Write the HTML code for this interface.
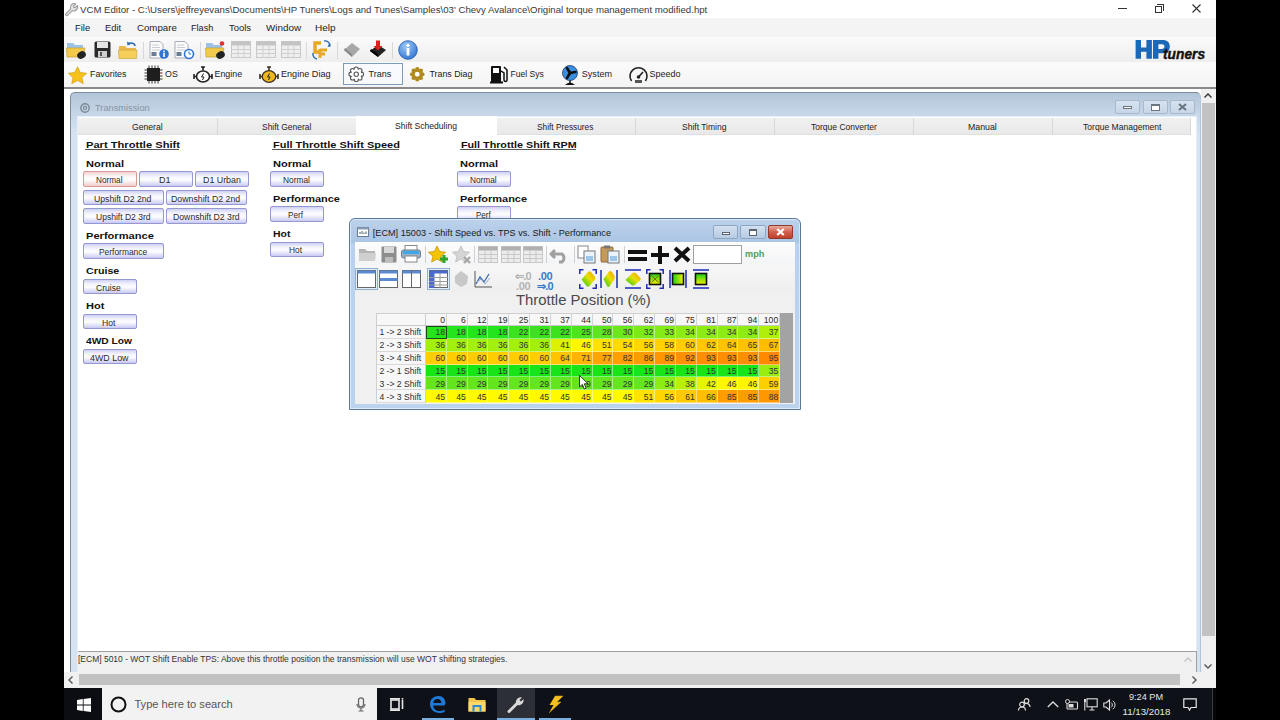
<!DOCTYPE html>
<html><head><meta charset="utf-8">
<style>
*{margin:0;padding:0;box-sizing:border-box}
html,body{width:1280px;height:720px;overflow:hidden;background:#000;font-family:"Liberation Sans",sans-serif;color:#1e1e1e;position:relative}
.a{position:absolute}
.t{position:absolute;white-space:nowrap;line-height:1}
svg{overflow:visible}
</style></head><body>
<div class="a" style="left:64px;top:0px;width:1152px;height:688px;background:#fff"></div>
<div class="a" style="left:64px;top:0px;width:1152px;height:18px;background:#fff"></div>
<svg class="a" style="left:65px;top:3px" width="13" height="13" viewBox="0 0 13 13"><path d="M0.9 10.6 L5.6 5.9 A4 4 0 0 1 10.8 0.8 L8.6 3 L8.9 4.4 L10.2 4.7 L12.4 2.5 A4 4 0 0 1 7.3 7.7 L2.6 12.3 A1.2 1.2 0 0 1 0.9 10.6Z" fill="#e4e4e4" stroke="#9a9a9a" stroke-width="1.1" stroke-linejoin="round"/></svg>
<div class="t" style="left:80.00px;top:5px;font-size:9.64px;color:#383838;transform:scaleX(1.0009);transform-origin:0 0;">VCM Editor - C:\Users\jeffreyevans\Documents\HP Tuners\Logs and Tunes\Samples\03' Chevy Avalance\Original torque management modified.hpt</div>
<div class="a" style="left:1118px;top:8px;width:9px;height:1px;background:#333"></div>
<div class="a" style="left:1155px;top:6px;width:7px;height:7px;border:1px solid #333;background:#fff"></div>
<div class="a" style="left:1157px;top:4px;width:7px;height:7px;border-top:1px solid #333;border-right:1px solid #333"></div>
<svg class="a" style="left:1192px;top:4px" width="9" height="9" viewBox="0 0 9 9"><path d="M0.5 0.5 L8.5 8.5 M8.5 0.5 L0.5 8.5" stroke="#333" stroke-width="1.1"/></svg>
<div class="a" style="left:64px;top:18px;width:1152px;height:19px;background:#f4f4f4"></div>
<div class="t" style="left:75.35px;top:23px;font-size:9.50px;color:#222;transform:scaleX(0.9893);transform-origin:0 0;">File</div>
<div class="t" style="left:105.05px;top:23px;font-size:9.50px;color:#222;transform:scaleX(0.9823);transform-origin:0 0;">Edit</div>
<div class="t" style="left:136.52px;top:23px;font-size:9.50px;color:#222;transform:scaleX(1.0189);transform-origin:0 0;">Compare</div>
<div class="t" style="left:190.77px;top:23px;font-size:9.50px;color:#222;transform:scaleX(0.9593);transform-origin:0 0;">Flash</div>
<div class="t" style="left:228.56px;top:23px;font-size:9.50px;color:#222;transform:scaleX(0.9929);transform-origin:0 0;">Tools</div>
<div class="t" style="left:265.60px;top:23px;font-size:9.50px;color:#222;transform:scaleX(1.0352);transform-origin:0 0;">Window</div>
<div class="t" style="left:315.45px;top:23px;font-size:9.50px;color:#222;transform:scaleX(1.0557);transform-origin:0 0;">Help</div>
<div class="a" style="left:64px;top:37px;width:1152px;height:25px;background:linear-gradient(#fafafa,#eeeeee)"></div>
<div class="a" style="left:64px;top:62px;width:1152px;height:25px;background:linear-gradient(#fbfbfb,#f4f4f4)"></div>
<div class="a" style="left:64px;top:87px;width:1152px;height:2px;background:#8a8a8a"></div>
<div class="a" style="left:64px;top:89px;width:1152px;height:599px;background:#fff"></div>
<svg class="a" style="left:66px;top:41px" width="21" height="18" viewBox="0 0 21 18"><path d="M1 2 L7 2 L9 4 L17 4 L17 15 L1 15Z" fill="#9cc2e6"/><path d="M0.5 7 L19 7 L17 16 L1 16Z" fill="#f2c94c" stroke="#c9a030" stroke-width="0.7"/><ellipse cx="15.5" cy="14" rx="4.5" ry="3.6" fill="#222" transform="rotate(-30 15.5 14)"/></svg>
<svg class="a" style="left:94px;top:41px" width="17" height="17" viewBox="0 0 17 17"><rect x="0.5" y="0.5" width="16" height="16" rx="1.5" fill="#2b2b2b"/><rect x="3" y="1" width="11" height="6" fill="#e6e6e6"/><rect x="4" y="10" width="9" height="6" fill="#cfcfcf"/><rect x="6" y="11" width="2" height="4" fill="#555"/></svg>
<svg class="a" style="left:118px;top:40px" width="20" height="19" viewBox="0 0 20 19"><path d="M1 6 L7 6 L9 8 L18 8 L18 18 L1 18Z" fill="#e8b84a"/><path d="M0.5 10 L19 10 L18.5 18.5 L1 18.5Z" fill="#f5cf5a" stroke="#d0a838" stroke-width="0.7"/><path d="M10 4 A4 3 0 0 1 17 6" fill="none" stroke="#2a6ab0" stroke-width="1.5"/><path d="M9 1.5 L9.5 5.5 L13 4Z" fill="#2a6ab0"/></svg>
<div class="a" style="left:143px;top:42px;width:1px;height:17px;background:#d8d8d8"></div>
<svg class="a" style="left:149px;top:41px" width="20" height="18" viewBox="0 0 20 18"><path d="M1 0.5 L11 0.5 L14 3.5 L14 17 L1 17Z" fill="#fbfbfb" stroke="#aab"/><path d="M3 4 H10 M3 6.5 H11 M3 9 H11" stroke="#c8ccd4"/><rect x="2.5" y="11" width="5" height="4" fill="#6a7d92"/><circle cx="15" cy="13" r="4.8" fill="#2f74d0"/><rect x="14.2" y="12" width="1.6" height="4" fill="#fff"/><circle cx="15" cy="10.5" r="0.9" fill="#fff"/></svg>
<svg class="a" style="left:174px;top:41px" width="20" height="18" viewBox="0 0 20 18"><path d="M1 0.5 L11 0.5 L14 3.5 L14 17 L1 17Z" fill="#fbfbfb" stroke="#aab"/><path d="M3 4 H10 M3 6.5 H11 M3 9 H11" stroke="#c8ccd4"/><rect x="2.5" y="11" width="5" height="4" fill="#6a7d92"/><circle cx="15" cy="13" r="4.5" fill="#fff" stroke="#2f74d0" stroke-width="1.6"/><path d="M15 10.5 V13 H17" fill="none" stroke="#2f74d0" stroke-width="1"/></svg>
<div class="a" style="left:199.5px;top:42px;width:1px;height:17px;background:#d8d8d8"></div>
<svg class="a" style="left:205px;top:41px" width="21" height="18" viewBox="0 0 21 18"><path d="M1 2 L7 2 L9 4 L17 4 L17 15 L1 15Z" fill="#9cc2e6"/><path d="M0.5 7 L19 7 L17 16 L1 16Z" fill="#f2c94c" stroke="#c9a030" stroke-width="0.7"/><ellipse cx="15.5" cy="14" rx="4.5" ry="3.6" fill="#222" transform="rotate(-30 15.5 14)"/><circle cx="17" cy="2.5" r="2.3" fill="#e03030"/></svg>
<svg class="a" style="left:230.6px;top:41px" width="20" height="17" viewBox="0 0 20 17"><rect x="0.5" y="0.5" width="19" height="16" fill="#efefef" stroke="#c8c8c8"/><rect x="0.5" y="0.5" width="19" height="4" fill="#c4c4c4"/><path d="M0.5 8.5 H19.5 M0.5 12.5 H19.5 M7 4 V17 M13 4 V17" stroke="#cfcfcf"/></svg>
<svg class="a" style="left:256px;top:41px" width="20" height="17" viewBox="0 0 20 17"><rect x="0.5" y="0.5" width="19" height="16" fill="#efefef" stroke="#c8c8c8"/><rect x="0.5" y="0.5" width="19" height="4" fill="#c4c4c4"/><path d="M0.5 8.5 H19.5 M0.5 12.5 H19.5 M7 4 V17 M13 4 V17" stroke="#cfcfcf"/></svg>
<svg class="a" style="left:281px;top:41px" width="20" height="17" viewBox="0 0 20 17"><rect x="0.5" y="0.5" width="19" height="16" fill="#efefef" stroke="#c8c8c8"/><rect x="0.5" y="0.5" width="19" height="4" fill="#c4c4c4"/><path d="M0.5 8.5 H19.5 M0.5 12.5 H19.5 M7 4 V17 M13 4 V17" stroke="#cfcfcf"/></svg>
<div class="a" style="left:306px;top:42px;width:1px;height:17px;background:#d8d8d8"></div>
<svg class="a" style="left:311.6px;top:40px" width="19" height="20" viewBox="0 0 19 20"><path d="M9 3 H3 V12 H9" fill="none" stroke="#e8a820" stroke-width="3.5"/><path d="M8 9 V18 M8 10 H15 M8 14 H13" fill="none" stroke="#e8a820" stroke-width="3"/><path d="M12 1 A5 5 0 0 1 18 6" fill="none" stroke="#2a6ab0" stroke-width="1.4"/><path d="M17 4 L18.5 7 L15.5 6.5Z" fill="#2a6ab0"/><path d="M1 13 A5 5 0 0 0 5 19" fill="none" stroke="#2a6ab0" stroke-width="1.4"/></svg>
<div class="a" style="left:337.4px;top:42px;width:1px;height:17px;background:#d8d8d8"></div>
<svg class="a" style="left:343.4px;top:41px" width="18" height="17" viewBox="0 0 18 17"><path d="M1 9 L9 2 L17 8 L9 16Z" fill="#a8a8a8"/><path d="M1 9 L9 16 L9 13 L2 7Z" fill="#8a8a8a"/></svg>
<svg class="a" style="left:368.6px;top:40px" width="18" height="19" viewBox="0 0 18 19"><path d="M1 11 L9 5 L17 10 L9 17Z" fill="#222"/><path d="M1 11 L9 17 L9 14 L2 9Z" fill="#000"/><path d="M7 0.5 H11 V6 H13.5 L9 10.5 L4.5 6 H7Z" fill="#e02020"/></svg>
<div class="a" style="left:392.3px;top:42px;width:1px;height:17px;background:#d8d8d8"></div>
<svg class="a" style="left:398.3px;top:40px" width="20" height="20" viewBox="0 0 20 20"><defs><radialGradient id="ib" cx="0.4" cy="0.3" r="0.8"><stop offset="0" stop-color="#9cc8f4"/><stop offset="1" stop-color="#2a6ed0"/></radialGradient></defs><circle cx="10" cy="10" r="9.3" fill="url(#ib)" stroke="#1a58b0" stroke-width="0.8"/><rect x="8.6" y="8" width="2.8" height="7.5" fill="#fff"/><circle cx="10" cy="5.3" r="1.6" fill="#fff"/></svg>
<svg class="a" style="left:68px;top:65.5px" width="19" height="18" viewBox="0 0 19 18"><path d="M9.5 0.8 L12.3 6.6 L18.6 7.3 L13.9 11.6 L15.2 17.6 L9.5 14.5 L3.8 17.6 L5.1 11.6 L0.4 7.3 L6.7 6.6Z" fill="#f6c21a" stroke="#d9a21a" stroke-width="0.8"/></svg>
<div class="t" style="left:90.0px;top:69.87px;font-size:8.9px;color:#222;">Favorites</div>
<svg class="a" style="left:143.5px;top:65px" width="19" height="19" viewBox="0 0 19 19"><rect x="3" y="3" width="13" height="13" fill="#1e1e1e"/><path d="M5 0.5 V3 M8 0.5 V3 M11 0.5 V3 M14 0.5 V3 M5 16 V18.5 M8 16 V18.5 M11 16 V18.5 M14 16 V18.5 M0.5 5 H3 M0.5 8 H3 M0.5 11 H3 M0.5 14 H3 M16 5 H18.5 M16 8 H18.5 M16 11 H18.5 M16 14 H18.5" stroke="#333" stroke-width="1"/></svg>
<div class="t" style="left:165.0px;top:69.87px;font-size:8.9px;color:#222;">OS</div>
<svg class="a" style="left:192.7px;top:65px" width="20" height="19" viewBox="0 0 20 19"><ellipse cx="10" cy="11.5" rx="6.5" ry="5.5" fill="#fff" stroke="#222" stroke-width="1.6"/><path d="M8 2 H12 M10 2 V5.5" stroke="#222" stroke-width="1.6"/><path d="M1 9 V14 M1 11.5 H3.5 M19 9 V14 M16.5 11.5 H19" stroke="#222" stroke-width="1.6"/><path d="M10.5 8.5 L8.5 12 H11 L9.5 15" fill="none" stroke="#222" stroke-width="1"/></svg>
<div class="t" style="left:214.5px;top:69.87px;font-size:8.9px;color:#222;">Engine</div>
<svg class="a" style="left:258.8px;top:65px" width="20" height="19" viewBox="0 0 20 19"><ellipse cx="10" cy="11.5" rx="6.8" ry="5.8" fill="#f0b820" stroke="#3a3020" stroke-width="1.3"/><path d="M8 2 H12 M10 2 V5.5" stroke="#3a3020" stroke-width="1.6"/><path d="M1 9 V14 M1 11.5 H3.5 M19 9 V14 M16.5 11.5 H19" stroke="#3a3020" stroke-width="1.6"/><path d="M10.5 8.5 L8.5 12 H11 L9.5 15" fill="none" stroke="#222" stroke-width="1"/></svg>
<div class="t" style="left:281.0px;top:69.70px;font-size:9.1px;color:#222;">Engine Diag</div>
<div class="a" style="left:343px;top:63px;width:60px;height:22px;border:1px solid #7d9bbb;background:#f7f9fc"></div>
<svg class="a" style="left:349px;top:67px" width="15" height="15" viewBox="0 0 15 15"><g fill="#fff" stroke="#555" stroke-width="1.1"><circle cx="12.45" cy="7.25" r="2.1"/><circle cx="10.93" cy="10.93" r="2.1"/><circle cx="7.25" cy="12.45" r="2.1"/><circle cx="3.57" cy="10.93" r="2.1"/><circle cx="2.05" cy="7.25" r="2.1"/><circle cx="3.57" cy="3.57" r="2.1"/><circle cx="7.25" cy="2.05" r="2.1"/><circle cx="10.93" cy="3.57" r="2.1"/></g><circle cx="7.25" cy="7.25" r="5" fill="#fff"/><circle cx="7.25" cy="7.25" r="2.2" fill="#fff" stroke="#555" stroke-width="1.1"/></svg>
<div class="t" style="left:368.6px;top:69.78px;font-size:9.0px;color:#222;">Trans</div>
<svg class="a" style="left:409.5px;top:67px" width="15" height="15" viewBox="0 0 15 15"><g fill="#b08a1c"><circle cx="12.45" cy="7.25" r="2.1"/><circle cx="10.93" cy="10.93" r="2.1"/><circle cx="7.25" cy="12.45" r="2.1"/><circle cx="3.57" cy="10.93" r="2.1"/><circle cx="2.05" cy="7.25" r="2.1"/><circle cx="3.57" cy="3.57" r="2.1"/><circle cx="7.25" cy="2.05" r="2.1"/><circle cx="10.93" cy="3.57" r="2.1"/></g><circle cx="7.25" cy="7.25" r="5.3" fill="#b08a1c"/><circle cx="7.25" cy="7.25" r="2.4" fill="#fff"/></svg>
<div class="t" style="left:429.5px;top:69.90px;font-size:8.86px;color:#222;">Trans Diag</div>
<svg class="a" style="left:490px;top:65px" width="18" height="19" viewBox="0 0 18 19"><rect x="1" y="1" width="10" height="17" rx="1" fill="#111"/><rect x="3" y="3" width="6" height="5" fill="#fff"/><rect x="0" y="16.5" width="13" height="2" fill="#111"/><path d="M11 6 L14 8 V15 A1.5 1.5 0 0 0 17 15 V5 L14 2" fill="none" stroke="#111" stroke-width="1.5"/></svg>
<div class="t" style="left:510.5px;top:70.16px;font-size:8.55px;color:#222;">Fuel Sys</div>
<svg class="a" style="left:562px;top:64.5px" width="16" height="21" viewBox="0 0 16 21"><circle cx="8" cy="8" r="7.5" fill="#3a8ee0" stroke="#1a3a6a" stroke-width="0.8"/><path d="M8 8 L5 3 M8 8 L13.5 7 M8 8 L5 13" stroke="#111" stroke-width="2.6" stroke-linecap="round"/><circle cx="8" cy="8" r="1.6" fill="#111"/><path d="M3 20 Q8 15 13 20Z" fill="#111"/><path d="M8 15.5 V18" stroke="#111" stroke-width="1.5"/></svg>
<div class="t" style="left:581.8px;top:69.72px;font-size:9.07px;color:#222;">System</div>
<svg class="a" style="left:627.5px;top:65px" width="21" height="19" viewBox="0 0 21 19"><path d="M3.5 16 A8.5 8.5 0 1 1 17.5 16" fill="none" stroke="#222" stroke-width="1.6"/><path d="M10.5 12 L15 7" stroke="#222" stroke-width="1.6"/><circle cx="10.5" cy="12" r="1.8" fill="#222"/><rect x="7" y="15" width="7" height="3" fill="#555"/></svg>
<div class="t" style="left:649.5px;top:69.79px;font-size:8.99px;color:#222;">Speedo</div>
<svg class="a" style="left:1135px;top:40px" width="36" height="19" viewBox="0 0 36 19"><path d="M0.6 0 H6 V7.6 H11.4 V0 H16.9 V18.8 H11.4 V11.8 H6 V18.8 H0.6Z" fill="#1b68b8"/><path d="M18 0 H27.5 C32.5 0 34.8 2.6 34.8 6.6 C34.8 10.8 32 13.2 27.5 13.2 H23.4 V18.8 H18Z M23.4 4.2 V9 H26.6 C28.5 9 29.4 8.2 29.4 6.6 C29.4 5 28.5 4.2 26.6 4.2Z" fill="#1b68b8"/></svg>
<div class="t" style="left:1163.2px;top:46.98px;font-size:14.2px;color:#111;font-weight:bold;font-style:italic;letter-spacing:0px;transform:scaleX(0.97);transform-origin:0 0;-webkit-text-stroke:0.4px #111;">tuners</div>
<div class="a" style="left:70px;top:92px;width:1131px;height:600px;background:linear-gradient(#b3c5d9 0px,#c9d9ea 24px,#d4e2f1 40px,#d4e2f1 100%);border:1px solid #7f8c99;border-right-color:#b0c4da;border-radius:5px 5px 0 0"></div>
<div class="a" style="left:77px;top:116px;width:1120px;height:560px;background:#fff;border:1px solid #e6eef7"></div>
<svg class="a" style="left:80px;top:103px" width="10" height="10" viewBox="0 0 10 10"><circle cx="5" cy="5" r="4.2" fill="none" stroke="#7c8894" stroke-width="1.4"/><circle cx="5" cy="5" r="1.6" fill="none" stroke="#7c8894" stroke-width="1.1"/></svg>
<div class="t" style="left:94.81px;top:103px;font-size:9.78px;color:#8593a3;transform:scaleX(0.9474);transform-origin:0 0;">Transmission</div>
<div class="a" style="left:1115px;top:100px;width:25px;height:14px;border:1px solid #a9b9cb;border-radius:2px;background:linear-gradient(#d6e2ef,#c7d6e7)"></div>
<div class="a" style="left:1143px;top:100px;width:25px;height:14px;border:1px solid #a9b9cb;border-radius:2px;background:linear-gradient(#d6e2ef,#c7d6e7)"></div>
<div class="a" style="left:1170px;top:100px;width:25px;height:14px;border:1px solid #a9b9cb;border-radius:2px;background:linear-gradient(#d6e2ef,#c7d6e7)"></div>
<div class="a" style="left:1123px;top:106px;width:9px;height:3px;border:1px solid #6a7580;background:#fff"></div>
<div class="a" style="left:1151px;top:104px;width:9px;height:7px;border:1px solid #6a7580;background:#fff;border-top-width:2px"></div>
<svg class="a" style="left:1178px;top:103px" width="9" height="8" viewBox="0 0 9 8"><path d="M1 1 L8 7 M8 1 L1 7" stroke="#6a7580" stroke-width="2"/></svg>
<div class="a" style="left:78px;top:118px;width:140px;height:17px;background:linear-gradient(#f1f1f1,#e9e9e9);border-right:1px solid #d8d8d8;border-bottom:1px solid #e0e0e0"></div>
<div class="t" style="left:132.07px;top:122px;font-size:9.50px;color:#222;transform:scaleX(0.9078);transform-origin:0 0;">General</div>
<div class="a" style="left:218px;top:118px;width:139px;height:17px;background:linear-gradient(#f1f1f1,#e9e9e9);border-right:1px solid #d8d8d8;border-bottom:1px solid #e0e0e0"></div>
<div class="t" style="left:262.12px;top:122px;font-size:9.50px;color:#222;transform:scaleX(0.8894);transform-origin:0 0;">Shift General</div>
<div class="a" style="left:356px;top:116px;width:141px;height:20px;background:#fff"></div>
<div class="t" style="left:395.11px;top:121px;font-size:9.50px;color:#222;transform:scaleX(0.9021);transform-origin:0 0;">Shift Scheduling</div>
<div class="a" style="left:497px;top:118px;width:139px;height:17px;background:linear-gradient(#f1f1f1,#e9e9e9);border-right:1px solid #d8d8d8;border-bottom:1px solid #e0e0e0"></div>
<div class="t" style="left:536.93px;top:122px;font-size:9.50px;color:#222;transform:scaleX(0.8754);transform-origin:0 0;">Shift Pressures</div>
<div class="a" style="left:636px;top:118px;width:139px;height:17px;background:linear-gradient(#f1f1f1,#e9e9e9);border-right:1px solid #d8d8d8;border-bottom:1px solid #e0e0e0"></div>
<div class="t" style="left:681.62px;top:122px;font-size:9.50px;color:#222;transform:scaleX(0.8946);transform-origin:0 0;">Shift Timing</div>
<div class="a" style="left:775px;top:118px;width:139px;height:17px;background:linear-gradient(#f1f1f1,#e9e9e9);border-right:1px solid #d8d8d8;border-bottom:1px solid #e0e0e0"></div>
<div class="t" style="left:810.83px;top:122px;font-size:9.50px;color:#222;transform:scaleX(0.8976);transform-origin:0 0;">Torque Converter</div>
<div class="a" style="left:914px;top:118px;width:139px;height:17px;background:linear-gradient(#f1f1f1,#e9e9e9);border-right:1px solid #d8d8d8;border-bottom:1px solid #e0e0e0"></div>
<div class="t" style="left:968.05px;top:122px;font-size:9.50px;color:#222;transform:scaleX(0.9222);transform-origin:0 0;">Manual</div>
<div class="a" style="left:1053px;top:118px;width:138px;height:17px;background:linear-gradient(#f1f1f1,#e9e9e9);border-right:1px solid #d8d8d8;border-bottom:1px solid #e0e0e0"></div>
<div class="t" style="left:1082.63px;top:122px;font-size:9.50px;color:#222;transform:scaleX(0.8999);transform-origin:0 0;">Torque Management</div>
<div class="t" style="left:85.68px;top:140px;font-size:9.78px;color:#111;transform:scaleX(1.1390);transform-origin:0 0;font-weight:bold;">Part Throttle Shift</div>
<div class="a" style="left:85px;top:149px;width:94px;height:1px;background:#555"></div>
<div class="t" style="left:272.79px;top:140px;font-size:9.78px;color:#111;transform:scaleX(1.1245);transform-origin:0 0;font-weight:bold;">Full Throttle Shift Speed</div>
<div class="a" style="left:272px;top:149px;width:127px;height:1px;background:#555"></div>
<div class="t" style="left:460.50px;top:140px;font-size:9.78px;color:#111;transform:scaleX(1.0997);transform-origin:0 0;font-weight:bold;">Full Throttle Shift RPM</div>
<div class="a" style="left:460px;top:149px;width:116px;height:1px;background:#555"></div>
<div class="t" style="left:85.78px;top:160px;font-size:9.36px;color:#111;transform:scaleX(1.1799);transform-origin:0 0;font-weight:bold;">Normal</div>
<div class="a" style="left:83px;top:171px;width:54px;height:16px;border:1px solid #d89a9a;background:linear-gradient(#f3cfcf 0%,#fdf6f6 30%,#fff 55%,#f4cccc 100%);border-radius:2px"></div>
<div class="t" style="left:95.74px;top:176px;font-size:9.22px;color:#2a2a2a;transform:scaleX(0.8911);transform-origin:0 0;">Normal</div>
<div class="a" style="left:139px;top:171px;width:54px;height:16px;border:1px solid #9698d2;background:linear-gradient(#cfd0f3 0%,#f3f3fe 30%,#fdfdff 55%,#c9c9f3 100%);border-radius:2px"></div>
<div class="t" style="left:159.38px;top:176px;font-size:9.22px;color:#2a2a2a;transform:scaleX(0.9811);transform-origin:0 0;">D1</div>
<div class="a" style="left:195px;top:171px;width:54px;height:16px;border:1px solid #9698d2;background:linear-gradient(#cfd0f3 0%,#f3f3fe 30%,#fdfdff 55%,#c9c9f3 100%);border-radius:2px"></div>
<div class="t" style="left:202.59px;top:176px;font-size:9.22px;color:#2a2a2a;transform:scaleX(0.9591);transform-origin:0 0;">D1 Urban</div>
<div class="a" style="left:83px;top:190px;width:81px;height:15px;border:1px solid #9698d2;background:linear-gradient(#cfd0f3 0%,#f3f3fe 30%,#fdfdff 55%,#c9c9f3 100%);border-radius:2px"></div>
<div class="t" style="left:93.65px;top:195px;font-size:9.22px;color:#2a2a2a;transform:scaleX(0.9409);transform-origin:0 0;">Upshift D2 2nd</div>
<div class="a" style="left:166px;top:190px;width:81px;height:15px;border:1px solid #9698d2;background:linear-gradient(#cfd0f3 0%,#f3f3fe 30%,#fdfdff 55%,#c9c9f3 100%);border-radius:2px"></div>
<div class="t" style="left:171.30px;top:195px;font-size:9.22px;color:#2a2a2a;transform:scaleX(0.9505);transform-origin:0 0;">Downshift D2 2nd</div>
<div class="a" style="left:83px;top:208px;width:81px;height:16px;border:1px solid #9698d2;background:linear-gradient(#cfd0f3 0%,#f3f3fe 30%,#fdfdff 55%,#c9c9f3 100%);border-radius:2px"></div>
<div class="t" style="left:95.76px;top:213px;font-size:9.22px;color:#2a2a2a;transform:scaleX(0.9262);transform-origin:0 0;">Upshift D2 3rd</div>
<div class="a" style="left:166px;top:208px;width:81px;height:16px;border:1px solid #9698d2;background:linear-gradient(#cfd0f3 0%,#f3f3fe 30%,#fdfdff 55%,#c9c9f3 100%);border-radius:2px"></div>
<div class="t" style="left:173.06px;top:213px;font-size:9.22px;color:#2a2a2a;transform:scaleX(0.9422);transform-origin:0 0;">Downshift D2 3rd</div>
<div class="t" style="left:85.78px;top:232px;font-size:9.36px;color:#111;transform:scaleX(1.1876);transform-origin:0 0;font-weight:bold;">Performance</div>
<div class="a" style="left:83px;top:243px;width:81px;height:16px;border:1px solid #9698d2;background:linear-gradient(#cfd0f3 0%,#f3f3fe 30%,#fdfdff 55%,#c9c9f3 100%);border-radius:2px"></div>
<div class="t" style="left:98.53px;top:248px;font-size:9.22px;color:#2a2a2a;transform:scaleX(0.9116);transform-origin:0 0;">Performance</div>
<div class="t" style="left:86.07px;top:267px;font-size:9.36px;color:#111;transform:scaleX(1.1460);transform-origin:0 0;font-weight:bold;">Cruise</div>
<div class="a" style="left:83px;top:279px;width:54px;height:15px;border:1px solid #9698d2;background:linear-gradient(#cfd0f3 0%,#f3f3fe 30%,#fdfdff 55%,#c9c9f3 100%);border-radius:2px"></div>
<div class="t" style="left:96.27px;top:284px;font-size:9.22px;color:#2a2a2a;transform:scaleX(0.9299);transform-origin:0 0;">Cruise</div>
<div class="t" style="left:85.78px;top:302px;font-size:9.36px;color:#111;transform:scaleX(1.1792);transform-origin:0 0;font-weight:bold;">Hot</div>
<div class="a" style="left:83px;top:314px;width:54px;height:15px;border:1px solid #9698d2;background:linear-gradient(#cfd0f3 0%,#f3f3fe 30%,#fdfdff 55%,#c9c9f3 100%);border-radius:2px"></div>
<div class="t" style="left:101.61px;top:319px;font-size:9.22px;color:#2a2a2a;transform:scaleX(0.9341);transform-origin:0 0;">Hot</div>
<div class="t" style="left:86.35px;top:337px;font-size:9.36px;color:#111;transform:scaleX(1.0961);transform-origin:0 0;font-weight:bold;">4WD Low</div>
<div class="a" style="left:83px;top:349px;width:54px;height:15px;border:1px solid #9698d2;background:linear-gradient(#cfd0f3 0%,#f3f3fe 30%,#fdfdff 55%,#c9c9f3 100%);border-radius:2px"></div>
<div class="t" style="left:89.82px;top:354px;font-size:9.22px;color:#2a2a2a;transform:scaleX(0.9629);transform-origin:0 0;">4WD Low</div>
<div class="t" style="left:272.78px;top:160px;font-size:9.36px;color:#111;transform:scaleX(1.1831);transform-origin:0 0;font-weight:bold;">Normal</div>
<div class="a" style="left:270px;top:171px;width:54px;height:16px;border:1px solid #9698d2;background:linear-gradient(#cfd0f3 0%,#f3f3fe 30%,#fdfdff 55%,#c9c9f3 100%);border-radius:2px"></div>
<div class="t" style="left:282.63px;top:176px;font-size:9.22px;color:#2a2a2a;transform:scaleX(0.9052);transform-origin:0 0;">Normal</div>
<div class="t" style="left:272.79px;top:195px;font-size:9.36px;color:#111;transform:scaleX(1.1716);transform-origin:0 0;font-weight:bold;">Performance</div>
<div class="a" style="left:270px;top:206px;width:54px;height:16px;border:1px solid #9698d2;background:linear-gradient(#cfd0f3 0%,#f3f3fe 30%,#fdfdff 55%,#c9c9f3 100%);border-radius:2px"></div>
<div class="t" style="left:288.35px;top:211px;font-size:9.22px;color:#2a2a2a;transform:scaleX(0.8840);transform-origin:0 0;">Perf</div>
<div class="t" style="left:272.82px;top:230px;font-size:9.36px;color:#111;transform:scaleX(1.1189);transform-origin:0 0;font-weight:bold;">Hot</div>
<div class="a" style="left:270px;top:242px;width:54px;height:15px;border:1px solid #9698d2;background:linear-gradient(#cfd0f3 0%,#f3f3fe 30%,#fdfdff 55%,#c9c9f3 100%);border-radius:2px"></div>
<div class="t" style="left:289.33px;top:246px;font-size:9.22px;color:#2a2a2a;transform:scaleX(0.9047);transform-origin:0 0;">Hot</div>
<div class="t" style="left:460.48px;top:160px;font-size:9.36px;color:#111;transform:scaleX(1.1831);transform-origin:0 0;font-weight:bold;">Normal</div>
<div class="a" style="left:457px;top:171px;width:54px;height:16px;border:1px solid #9698d2;background:linear-gradient(#cfd0f3 0%,#f3f3fe 30%,#fdfdff 55%,#c9c9f3 100%);border-radius:2px"></div>
<div class="t" style="left:469.84px;top:176px;font-size:9.22px;color:#2a2a2a;transform:scaleX(0.8982);transform-origin:0 0;">Normal</div>
<div class="t" style="left:460.49px;top:195px;font-size:9.36px;color:#111;transform:scaleX(1.1734);transform-origin:0 0;font-weight:bold;">Performance</div>
<div class="a" style="left:457px;top:206px;width:54px;height:16px;border:1px solid #9698d2;background:linear-gradient(#cfd0f3 0%,#f3f3fe 30%,#fdfdff 55%,#c9c9f3 100%);border-radius:2px"></div>
<div class="t" style="left:475.61px;top:211px;font-size:9.22px;color:#2a2a2a;transform:scaleX(0.8654);transform-origin:0 0;">Perf</div>
<div class="a" style="left:78px;top:651px;width:1119px;height:22px;background:#f0f0f0;border-top:1px solid #a0a0a0;border-right:1px solid #a0a0a0"></div>
<div class="t" style="left:77.91px;top:654px;font-size:9.50px;color:#333;transform:scaleX(0.8926);transform-origin:0 0;">[ECM] 5010 - WOT Shift Enable TPS: Above this throttle position the transmission will use WOT shifting strategies.</div>
<svg class="a" style="left:1184px;top:657px" width="8" height="5" viewBox="0 0 8 5"><path d="M0.5 4.5 L4 1 L7.5 4.5" fill="none" stroke="#c4c4c4" stroke-width="1.3"/></svg>
<div class="a" style="left:1201px;top:89px;width:15px;height:583px;background:#f0f0f0"></div>
<div class="a" style="left:1202px;top:103px;width:13px;height:533px;background:#c2c2c2"></div>
<svg class="a" style="left:1204px;top:93px" width="8" height="5" viewBox="0 0 8 5"><path d="M0.5 4.5 L4 1 L7.5 4.5" fill="none" stroke="#333" stroke-width="1.4"/></svg>
<svg class="a" style="left:1204px;top:664px" width="8" height="5" viewBox="0 0 8 5"><path d="M0.5 0.5 L4 4 L7.5 0.5" fill="none" stroke="#555" stroke-width="1.4"/></svg>
<div class="a" style="left:64px;top:672px;width:1152px;height:16px;background:#f0f0f0"></div>
<div class="a" style="left:79px;top:674px;width:1101px;height:11px;background:#c2c2c2"></div>
<svg class="a" style="left:68px;top:676px" width="5" height="8" viewBox="0 0 5 8"><path d="M4.5 0.5 L1 4 L4.5 7.5" fill="none" stroke="#555" stroke-width="1.4"/></svg>
<svg class="a" style="left:1192px;top:676px" width="5" height="8" viewBox="0 0 5 8"><path d="M0.5 0.5 L4 4 L0.5 7.5" fill="none" stroke="#555" stroke-width="1.4"/></svg>
<div class="a" style="left:349px;top:218px;width:452px;height:192px;background:linear-gradient(#bcd2ec 0px,#abc5e4 24px,#b9d1ee 25px,#bcd3ee 100%);border:1px solid #5a7a9a;border-radius:6px 6px 0 0;box-shadow:0 0 0 1px rgba(255,255,255,0.5) inset"></div>
<svg class="a" style="left:357px;top:226px" width="12" height="12" viewBox="0 0 12 12"><rect x="0.5" y="1.5" width="11" height="9" fill="#fff" stroke="#6a7d92"/><rect x="0.5" y="1.5" width="11" height="2" fill="#8aa0b8"/><path d="M3 8 L3 6 M5 8 L5 5 M7 8 L7 6.5 M9 8 L9 5.5" stroke="#4a5a6a" stroke-width="1"/></svg>
<div class="t" style="left:372.8px;top:228.65px;font-size:9.15px;color:#1a1a1a;">[ECM] 15003 - Shift Speed vs. TPS vs. Shift - Performance</div>
<div class="a" style="left:713px;top:225px;width:25px;height:14px;border:1px solid #8fa7c2;border-radius:2px;background:linear-gradient(#d3e1f0,#b6cbe2)"></div>
<div class="a" style="left:722px;top:232px;width:8px;height:3px;border:1px solid #5a6470;background:#fff"></div>
<div class="a" style="left:740px;top:225px;width:26px;height:14px;border:1px solid #8fa7c2;border-radius:2px;background:linear-gradient(#d3e1f0,#b6cbe2)"></div>
<div class="a" style="left:749px;top:229px;width:8px;height:7px;border:1px solid #5a6470;border-top-width:2px;background:#fff"></div>
<div class="a" style="left:768px;top:225px;width:25px;height:14px;border:1px solid #8d3a2a;border-radius:2px;background:linear-gradient(#e9a99b 0%,#d0604c 50%,#c2402c 100%)"></div>
<svg class="a" style="left:776px;top:228px" width="9" height="8" viewBox="0 0 9 8"><path d="M1.2 1 L7.8 7 M7.8 1 L1.2 7" stroke="#fff" stroke-width="2.2"/></svg>
<div class="a" style="left:355px;top:242px;width:440px;height:162px;background:#f0f0f0"></div>
<div class="a" style="left:355px;top:242px;width:440px;height:23px;background:linear-gradient(#fdfdfd,#f3f4f6)"></div>
<div class="a" style="left:355px;top:265px;width:440px;height:27px;background:linear-gradient(#f7f7f7,#eeeeee)"></div>
<svg class="a" style="left:357.6px;top:246px" width="19" height="17" viewBox="0 0 19 17"><path d="M1 3 L7 3 L9 5 L17 5 L17 15 L1 15Z" fill="#b5b5b5"/><path d="M1 7 L18 7 L17 15 L1 15Z" fill="#cfcfcf"/></svg>
<svg class="a" style="left:381px;top:246px" width="16" height="17" viewBox="0 0 16 17"><rect x="0.5" y="0.5" width="15" height="16" rx="1" fill="#8d8d8d"/><rect x="3" y="1" width="10" height="6" fill="#d8d8d8"/><rect x="4" y="11" width="8" height="5" fill="#bdbdbd"/></svg>
<svg class="a" style="left:401px;top:245px" width="20" height="18" viewBox="0 0 20 18"><rect x="4" y="0.5" width="12" height="5" fill="#fff" stroke="#888"/><rect x="0.5" y="5" width="19" height="8" rx="2" fill="#9fb2c4" stroke="#6b7b8b"/><rect x="2" y="6" width="16" height="3" fill="#3fa6e8"/><rect x="4" y="11" width="12" height="6" fill="#fff" stroke="#888"/></svg>
<div class="a" style="left:425px;top:246px;width:1px;height:17px;background:#d0d0d0"></div>
<svg class="a" style="left:428px;top:245px" width="22" height="19" viewBox="0 0 22 19"><path d="M9 1 L11.6 6.6 L17.6 7.2 L13 11.2 L14.4 17 L9 14 L3.6 17 L5 11.2 L0.4 7.2 L6.4 6.6Z" fill="#f5c400" stroke="#c89400" stroke-width="0.8"/><path d="M16 10 L16 18 M12 14 L20 14" stroke="#2da52d" stroke-width="3"/></svg>
<svg class="a" style="left:452px;top:245px" width="19" height="19" viewBox="0 0 19 19"><path d="M9 1 L11.6 6.6 L17.6 7.2 L13 11.2 L14.4 17 L9 14 L3.6 17 L5 11.2 L0.4 7.2 L6.4 6.6Z" fill="#d5d5d5" stroke="#bdbdbd" stroke-width="0.8"/><path d="M12 12 L18 18 M18 12 L12 18" stroke="#a8a8a8" stroke-width="2.4"/></svg>
<div class="a" style="left:474px;top:246px;width:1px;height:17px;background:#d0d0d0"></div>
<svg class="a" style="left:478px;top:246px" width="20" height="17" viewBox="0 0 20 17"><rect x="0.5" y="0.5" width="19" height="16" fill="#ececec" stroke="#c8c8c8"/><rect x="0.5" y="0.5" width="19" height="4" fill="#b0b0b0"/><path d="M0.5 8.5 H19.5 M0.5 12.5 H19.5 M7 4 V17 M13 4 V17" stroke="#c8c8c8"/></svg>
<svg class="a" style="left:500.5px;top:246px" width="20" height="17" viewBox="0 0 20 17"><rect x="0.5" y="0.5" width="19" height="16" fill="#ececec" stroke="#c8c8c8"/><rect x="0.5" y="0.5" width="19" height="4" fill="#b0b0b0"/><path d="M0.5 8.5 H19.5 M0.5 12.5 H19.5 M7 4 V17 M13 4 V17" stroke="#c8c8c8"/></svg>
<svg class="a" style="left:523px;top:246px" width="20" height="17" viewBox="0 0 20 17"><rect x="0.5" y="0.5" width="19" height="16" fill="#ececec" stroke="#c8c8c8"/><rect x="0.5" y="0.5" width="19" height="4" fill="#b0b0b0"/><path d="M0.5 8.5 H19.5 M0.5 12.5 H19.5 M7 4 V17 M13 4 V17" stroke="#c8c8c8"/></svg>
<div class="a" style="left:546px;top:246px;width:1px;height:17px;background:#d0d0d0"></div>
<svg class="a" style="left:550px;top:246px" width="20" height="17" viewBox="0 0 20 17"><path d="M5 4 L1 8 L5 12 M1.5 8 L12 8 A5 5 0 0 1 12 16 L9 16" fill="none" stroke="#a0a0a0" stroke-width="3" stroke-linejoin="round"/></svg>
<div class="a" style="left:574px;top:246px;width:1px;height:17px;background:#d0d0d0"></div>
<svg class="a" style="left:577px;top:245px" width="20" height="19" viewBox="0 0 20 19"><rect x="1" y="1" width="10" height="12" fill="#fff" stroke="#888"/><rect x="7" y="6" width="11" height="12" fill="#eaf2fa" stroke="#777"/><rect x="9" y="11" width="7" height="5" fill="#9cc6ea"/></svg>
<svg class="a" style="left:600px;top:245px" width="21" height="19" viewBox="0 0 21 19"><rect x="1" y="2" width="12" height="15" rx="1" fill="#c69a5a" stroke="#8a6a3a"/><rect x="4" y="0.5" width="6" height="3" fill="#777"/><rect x="8" y="6" width="11" height="12" fill="#eaf2fa" stroke="#777"/><rect x="10" y="11" width="7" height="5" fill="#9cc6ea"/></svg>
<div class="a" style="left:624px;top:246px;width:1px;height:17px;background:#d0d0d0"></div>
<div class="a" style="left:627.5px;top:249.5px;width:19.5px;height:4px;background:#111"></div>
<div class="a" style="left:627.5px;top:256.5px;width:19.5px;height:4px;background:#111"></div>
<div class="a" style="left:651px;top:252.5px;width:18px;height:4px;background:#111"></div>
<div class="a" style="left:658px;top:245.5px;width:4px;height:18px;background:#111"></div>
<svg class="a" style="left:673px;top:246px" width="18" height="17" viewBox="0 0 18 17"><path d="M2 2 L16 15 M16 2 L2 15" stroke="#111" stroke-width="4"/></svg>
<div class="a" style="left:693px;top:245px;width:49px;height:19px;background:#fff;border:1px solid #a0a0a0"></div>
<div class="t" style="left:745.0px;top:249.71px;font-size:9.2px;color:#55a055;font-weight:bold;">mph</div>
<div class="a" style="left:355px;top:268px;width:23px;height:22px;border:1px solid #8fb0d0;background:#e6eef7"></div>
<svg class="a" style="left:357px;top:270px" width="19" height="18" viewBox="0 0 19 18"><rect x="0.5" y="0.5" width="18" height="17" fill="#fff" stroke="#666"/><rect x="0.5" y="0.5" width="18" height="3" fill="#5a8ad0"/></svg>
<svg class="a" style="left:379px;top:270px" width="19" height="18" viewBox="0 0 19 18"><rect x="0.5" y="0.5" width="18" height="17" fill="#fff" stroke="#666"/><rect x="0.5" y="0.5" width="18" height="3" fill="#5a8ad0"/><rect x="0.5" y="8" width="18" height="3" fill="#5a8ad0"/></svg>
<svg class="a" style="left:401.8px;top:270px" width="19" height="18" viewBox="0 0 19 18"><rect x="0.5" y="0.5" width="18" height="17" fill="#fff" stroke="#666"/><rect x="0.5" y="0.5" width="18" height="3" fill="#5a8ad0"/><path d="M9.5 0 V18" stroke="#666"/></svg>
<div class="a" style="left:427px;top:268px;width:23px;height:22px;border:1px solid #8fb0d0;background:#e6eef7"></div>
<svg class="a" style="left:429px;top:270px" width="19" height="18" viewBox="0 0 19 18"><rect x="0.5" y="0.5" width="18" height="17" fill="#fff" stroke="#666"/><rect x="0.5" y="0.5" width="18" height="3" fill="#4a6ad0"/><rect x="0.5" y="3" width="5" height="15" fill="#4a6ad0"/><path d="M0 7.5 H19 M0 11.5 H19 M0 15 H19 M11 3 V18" stroke="#999"/></svg>
<svg class="a" style="left:453px;top:270px" width="17" height="18" viewBox="0 0 17 18"><path d="M8 1 L15 6 L14 14 L8 17 L2 13 L2 6Z" fill="#c8c8c8"/></svg>
<svg class="a" style="left:474px;top:270px" width="19" height="18" viewBox="0 0 19 18"><path d="M1 1 V17 H18" fill="none" stroke="#555"/><path d="M2 14 L6 7 L10 12 L15 4" fill="none" stroke="#3a6ab0" stroke-width="1.3"/><path d="M3 12 L7 9 L11 14 L16 8" fill="none" stroke="#8aa6c8" stroke-width="0.9"/></svg>
<div class="t" style="left:515.0px;top:270.69px;font-size:11px;color:#b4b4b4;font-weight:bold;letter-spacing:-0.8px;">&#8656;.0</div>
<div class="t" style="left:516.0px;top:280.69px;font-size:11px;color:#b4b4b4;font-weight:bold;letter-spacing:-0.3px;">.00</div>
<div class="t" style="left:538.0px;top:270.69px;font-size:11px;color:#3a7ac8;font-weight:bold;letter-spacing:-0.3px;">.00</div>
<div class="t" style="left:537.0px;top:280.69px;font-size:11px;color:#3a7ac8;font-weight:bold;letter-spacing:-0.8px;">&#8658;.0</div>
<svg class="a" style="left:578.8px;top:269px" width="18" height="20" viewBox="0 0 18 20"><defs><linearGradient id="gd" x1="1" y1="0" x2="0" y2="1"><stop offset="0" stop-color="#f09a00"/><stop offset="0.45" stop-color="#e8e000"/><stop offset="1" stop-color="#10c818"/></linearGradient><linearGradient id="gv" x1="0" y1="0" x2="0" y2="1"><stop offset="0" stop-color="#18d018"/><stop offset="1" stop-color="#f8f000"/></linearGradient><linearGradient id="gh" x1="0" y1="0" x2="1" y2="0"><stop offset="0" stop-color="#18d018"/><stop offset="1" stop-color="#f8f000"/></linearGradient></defs><path d="M2.5 10.5 L9 3 Q10.5 1.5 12 3 L16 8 Q17 9.5 15.5 11 L10.5 17 Q9 18.5 7.5 17Z" fill="url(#gd)"/><path d="M0.8 5 V0.8 H4.5 M13.5 0.8 H17.2 V5 M0.8 15 V19.2 H4.5 M13.5 19.2 H17.2 V15" fill="none" stroke="#1a28b8" stroke-width="1.5"/></svg>
<svg class="a" style="left:600.4px;top:269px" width="18" height="20" viewBox="0 0 18 20"><path d="M3.5 10 L9 2.5 Q10.5 1.5 12 3 L14.5 7 Q15 9 14 11 L9.5 17.5 Q8 18.5 7 17Z" fill="url(#gd)"/><path d="M1 1 V19 M17 1 V19" stroke="#1a28b8" stroke-width="1.5"/></svg>
<svg class="a" style="left:623.8px;top:269px" width="18" height="20" viewBox="0 0 18 20"><path d="M1.5 11 L8.5 4 Q10 3 11.5 4 L16.5 9 Q17 10.5 16 11.5 L10.5 16 Q9 17 7.5 16Z" fill="url(#gd)"/><path d="M1 1 H17 M1 19 H17" stroke="#1a28b8" stroke-width="1.5"/></svg>
<svg class="a" style="left:646.4px;top:269px" width="18" height="20" viewBox="0 0 18 20"><rect x="3.5" y="4.5" width="11" height="11" fill="url(#gv)" stroke="#111" stroke-width="1.6"/><path d="M5.5 6.5 L12.5 13.5 M12.5 6.5 L5.5 13.5" stroke="#8a4a10" stroke-width="0.8"/><path d="M0.8 5 V0.8 H4.5 M13.5 0.8 H17.2 V5 M0.8 15 V19.2 H4.5 M13.5 19.2 H17.2 V15" fill="none" stroke="#1a28b8" stroke-width="1.5"/></svg>
<svg class="a" style="left:668.7px;top:269px" width="18" height="20" viewBox="0 0 18 20"><rect x="3.5" y="4.5" width="11" height="11" fill="url(#gh)" stroke="#111" stroke-width="1.6"/><path d="M1 1 V19 M17 1 V19" stroke="#1a28b8" stroke-width="1.5"/></svg>
<svg class="a" style="left:692px;top:269px" width="18" height="20" viewBox="0 0 18 20"><rect x="3.5" y="4.5" width="11" height="11" fill="url(#gv)" stroke="#111" stroke-width="1.6"/><path d="M1 1 H17 M1 19 H17" stroke="#1a28b8" stroke-width="1.5"/></svg>
<div class="t" style="left:516.0px;top:293.00px;font-size:14.88px;color:#4a4a4a;letter-spacing:0px;">Throttle Position (%)</div>
<div class="a" style="left:376px;top:313px;width:404px;height:90px;background:#fff"></div>
<div class="a" style="left:376px;top:313px;width:404px;height:13px;background:#f7f7f7;border-top:1px solid #cfcfcf"></div>
<div class="a" style="left:376px;top:313px;width:1px;height:90px;background:#cfcfcf"></div>
<div class="a" style="left:425px;top:313px;width:1px;height:13px;background:#cfcfcf"></div>
<div class="a" style="left:446px;top:313px;width:1px;height:13px;background:#d4d4d4"></div>
<div class="t" style="left:426.0px;top:315.62px;font-size:8.6px;color:#2a2a2a;width:19px;text-align:right;">0</div>
<div class="a" style="left:467px;top:313px;width:1px;height:13px;background:#d4d4d4"></div>
<div class="t" style="left:446.8px;top:315.62px;font-size:8.6px;color:#2a2a2a;width:19px;text-align:right;">6</div>
<div class="a" style="left:487px;top:313px;width:1px;height:13px;background:#d4d4d4"></div>
<div class="t" style="left:467.6px;top:315.62px;font-size:8.6px;color:#2a2a2a;width:19px;text-align:right;">12</div>
<div class="a" style="left:508px;top:313px;width:1px;height:13px;background:#d4d4d4"></div>
<div class="t" style="left:488.5px;top:315.62px;font-size:8.6px;color:#2a2a2a;width:19px;text-align:right;">19</div>
<div class="a" style="left:529px;top:313px;width:1px;height:13px;background:#d4d4d4"></div>
<div class="t" style="left:509.3px;top:315.62px;font-size:8.6px;color:#2a2a2a;width:19px;text-align:right;">25</div>
<div class="a" style="left:550px;top:313px;width:1px;height:13px;background:#d4d4d4"></div>
<div class="t" style="left:530.1px;top:315.62px;font-size:8.6px;color:#2a2a2a;width:19px;text-align:right;">31</div>
<div class="a" style="left:571px;top:313px;width:1px;height:13px;background:#d4d4d4"></div>
<div class="t" style="left:550.9px;top:315.62px;font-size:8.6px;color:#2a2a2a;width:19px;text-align:right;">37</div>
<div class="a" style="left:592px;top:313px;width:1px;height:13px;background:#d4d4d4"></div>
<div class="t" style="left:571.8px;top:315.62px;font-size:8.6px;color:#2a2a2a;width:19px;text-align:right;">44</div>
<div class="a" style="left:612px;top:313px;width:1px;height:13px;background:#d4d4d4"></div>
<div class="t" style="left:592.6px;top:315.62px;font-size:8.6px;color:#2a2a2a;width:19px;text-align:right;">50</div>
<div class="a" style="left:633px;top:313px;width:1px;height:13px;background:#d4d4d4"></div>
<div class="t" style="left:613.4px;top:315.62px;font-size:8.6px;color:#2a2a2a;width:19px;text-align:right;">56</div>
<div class="a" style="left:654px;top:313px;width:1px;height:13px;background:#d4d4d4"></div>
<div class="t" style="left:634.2px;top:315.62px;font-size:8.6px;color:#2a2a2a;width:19px;text-align:right;">62</div>
<div class="a" style="left:675px;top:313px;width:1px;height:13px;background:#d4d4d4"></div>
<div class="t" style="left:655.1px;top:315.62px;font-size:8.6px;color:#2a2a2a;width:19px;text-align:right;">69</div>
<div class="a" style="left:696px;top:313px;width:1px;height:13px;background:#d4d4d4"></div>
<div class="t" style="left:675.9px;top:315.62px;font-size:8.6px;color:#2a2a2a;width:19px;text-align:right;">75</div>
<div class="a" style="left:717px;top:313px;width:1px;height:13px;background:#d4d4d4"></div>
<div class="t" style="left:696.7px;top:315.62px;font-size:8.6px;color:#2a2a2a;width:19px;text-align:right;">81</div>
<div class="a" style="left:737px;top:313px;width:1px;height:13px;background:#d4d4d4"></div>
<div class="t" style="left:717.5px;top:315.62px;font-size:8.6px;color:#2a2a2a;width:19px;text-align:right;">87</div>
<div class="a" style="left:758px;top:313px;width:1px;height:13px;background:#d4d4d4"></div>
<div class="t" style="left:738.4px;top:315.62px;font-size:8.6px;color:#2a2a2a;width:19px;text-align:right;">94</div>
<div class="a" style="left:779px;top:313px;width:1px;height:13px;background:#d4d4d4"></div>
<div class="t" style="left:759.2px;top:315.62px;font-size:8.6px;color:#2a2a2a;width:19px;text-align:right;">100</div>
<div class="a" style="left:376px;top:325px;width:404px;height:1px;background:#c8c8c8"></div>
<div class="a" style="left:377px;top:326px;width:49px;height:13px;background:#f7f7f7;border-bottom:1px solid #d8d8d8;border-right:1px solid #d0d0d0"></div>
<div class="t" style="left:379.4px;top:328.42px;font-size:8.6px;color:#2e2e2e;">1 -> 2 Shift</div>
<div class="a" style="left:426px;top:326px;width:21px;height:13px;background:#24e41c;border-right:1px solid rgba(255,255,255,0.45);border-bottom:1px solid rgba(255,255,255,0.45)"></div>
<div class="t" style="left:426.0px;top:328.42px;font-size:8.6px;color:#333;width:19px;text-align:right;">18</div>
<div class="a" style="left:447px;top:326px;width:21px;height:13px;background:#24e41c;border-right:1px solid rgba(255,255,255,0.45);border-bottom:1px solid rgba(255,255,255,0.45)"></div>
<div class="t" style="left:446.8px;top:328.42px;font-size:8.6px;color:#333;width:19px;text-align:right;">18</div>
<div class="a" style="left:468px;top:326px;width:20px;height:13px;background:#24e41c;border-right:1px solid rgba(255,255,255,0.45);border-bottom:1px solid rgba(255,255,255,0.45)"></div>
<div class="t" style="left:467.6px;top:328.42px;font-size:8.6px;color:#333;width:19px;text-align:right;">18</div>
<div class="a" style="left:488px;top:326px;width:21px;height:13px;background:#24e41c;border-right:1px solid rgba(255,255,255,0.45);border-bottom:1px solid rgba(255,255,255,0.45)"></div>
<div class="t" style="left:488.5px;top:328.42px;font-size:8.6px;color:#333;width:19px;text-align:right;">18</div>
<div class="a" style="left:509px;top:326px;width:21px;height:13px;background:#3ce21e;border-right:1px solid rgba(255,255,255,0.45);border-bottom:1px solid rgba(255,255,255,0.45)"></div>
<div class="t" style="left:509.3px;top:328.42px;font-size:8.6px;color:#333;width:19px;text-align:right;">22</div>
<div class="a" style="left:530px;top:326px;width:21px;height:13px;background:#3ce21e;border-right:1px solid rgba(255,255,255,0.45);border-bottom:1px solid rgba(255,255,255,0.45)"></div>
<div class="t" style="left:530.1px;top:328.42px;font-size:8.6px;color:#333;width:19px;text-align:right;">22</div>
<div class="a" style="left:551px;top:326px;width:21px;height:13px;background:#3ce21e;border-right:1px solid rgba(255,255,255,0.45);border-bottom:1px solid rgba(255,255,255,0.45)"></div>
<div class="t" style="left:550.9px;top:328.42px;font-size:8.6px;color:#333;width:19px;text-align:right;">22</div>
<div class="a" style="left:572px;top:326px;width:21px;height:13px;background:#4de41e;border-right:1px solid rgba(255,255,255,0.45);border-bottom:1px solid rgba(255,255,255,0.45)"></div>
<div class="t" style="left:571.8px;top:328.42px;font-size:8.6px;color:#333;width:19px;text-align:right;">25</div>
<div class="a" style="left:593px;top:326px;width:20px;height:13px;background:#5ee51e;border-right:1px solid rgba(255,255,255,0.45);border-bottom:1px solid rgba(255,255,255,0.45)"></div>
<div class="t" style="left:592.6px;top:328.42px;font-size:8.6px;color:#333;width:19px;text-align:right;">28</div>
<div class="a" style="left:613px;top:326px;width:21px;height:13px;background:#6ce71c;border-right:1px solid rgba(255,255,255,0.45);border-bottom:1px solid rgba(255,255,255,0.45)"></div>
<div class="t" style="left:613.4px;top:328.42px;font-size:8.6px;color:#333;width:19px;text-align:right;">30</div>
<div class="a" style="left:634px;top:326px;width:21px;height:13px;background:#7cea18;border-right:1px solid rgba(255,255,255,0.45);border-bottom:1px solid rgba(255,255,255,0.45)"></div>
<div class="t" style="left:634.2px;top:328.42px;font-size:8.6px;color:#333;width:19px;text-align:right;">32</div>
<div class="a" style="left:655px;top:326px;width:21px;height:13px;background:#84eb16;border-right:1px solid rgba(255,255,255,0.45);border-bottom:1px solid rgba(255,255,255,0.45)"></div>
<div class="t" style="left:655.1px;top:328.42px;font-size:8.6px;color:#333;width:19px;text-align:right;">33</div>
<div class="a" style="left:676px;top:326px;width:21px;height:13px;background:#8cec14;border-right:1px solid rgba(255,255,255,0.45);border-bottom:1px solid rgba(255,255,255,0.45)"></div>
<div class="t" style="left:675.9px;top:328.42px;font-size:8.6px;color:#333;width:19px;text-align:right;">34</div>
<div class="a" style="left:697px;top:326px;width:21px;height:13px;background:#8cec14;border-right:1px solid rgba(255,255,255,0.45);border-bottom:1px solid rgba(255,255,255,0.45)"></div>
<div class="t" style="left:696.7px;top:328.42px;font-size:8.6px;color:#333;width:19px;text-align:right;">34</div>
<div class="a" style="left:718px;top:326px;width:20px;height:13px;background:#8cec14;border-right:1px solid rgba(255,255,255,0.45);border-bottom:1px solid rgba(255,255,255,0.45)"></div>
<div class="t" style="left:717.5px;top:328.42px;font-size:8.6px;color:#333;width:19px;text-align:right;">34</div>
<div class="a" style="left:738px;top:326px;width:21px;height:13px;background:#8cec14;border-right:1px solid rgba(255,255,255,0.45);border-bottom:1px solid rgba(255,255,255,0.45)"></div>
<div class="t" style="left:738.4px;top:328.42px;font-size:8.6px;color:#333;width:19px;text-align:right;">34</div>
<div class="a" style="left:759px;top:326px;width:21px;height:13px;background:#aff00a;border-right:1px solid rgba(255,255,255,0.45);border-bottom:1px solid rgba(255,255,255,0.45)"></div>
<div class="t" style="left:759.2px;top:328.42px;font-size:8.6px;color:#333;width:19px;text-align:right;">37</div>
<div class="a" style="left:377px;top:339px;width:49px;height:13px;background:#f7f7f7;border-bottom:1px solid #d8d8d8;border-right:1px solid #d0d0d0"></div>
<div class="t" style="left:379.4px;top:341.28px;font-size:8.6px;color:#2e2e2e;">2 -> 3 Shift</div>
<div class="a" style="left:426px;top:339px;width:21px;height:13px;background:#a3ef0d;border-right:1px solid rgba(255,255,255,0.45);border-bottom:1px solid rgba(255,255,255,0.45)"></div>
<div class="t" style="left:426.0px;top:341.28px;font-size:8.6px;color:#333;width:19px;text-align:right;">36</div>
<div class="a" style="left:447px;top:339px;width:21px;height:13px;background:#a3ef0d;border-right:1px solid rgba(255,255,255,0.45);border-bottom:1px solid rgba(255,255,255,0.45)"></div>
<div class="t" style="left:446.8px;top:341.28px;font-size:8.6px;color:#333;width:19px;text-align:right;">36</div>
<div class="a" style="left:468px;top:339px;width:20px;height:13px;background:#a3ef0d;border-right:1px solid rgba(255,255,255,0.45);border-bottom:1px solid rgba(255,255,255,0.45)"></div>
<div class="t" style="left:467.6px;top:341.28px;font-size:8.6px;color:#333;width:19px;text-align:right;">36</div>
<div class="a" style="left:488px;top:339px;width:21px;height:13px;background:#a3ef0d;border-right:1px solid rgba(255,255,255,0.45);border-bottom:1px solid rgba(255,255,255,0.45)"></div>
<div class="t" style="left:488.5px;top:341.28px;font-size:8.6px;color:#333;width:19px;text-align:right;">36</div>
<div class="a" style="left:509px;top:339px;width:21px;height:13px;background:#a3ef0d;border-right:1px solid rgba(255,255,255,0.45);border-bottom:1px solid rgba(255,255,255,0.45)"></div>
<div class="t" style="left:509.3px;top:341.28px;font-size:8.6px;color:#333;width:19px;text-align:right;">36</div>
<div class="a" style="left:530px;top:339px;width:21px;height:13px;background:#a3ef0d;border-right:1px solid rgba(255,255,255,0.45);border-bottom:1px solid rgba(255,255,255,0.45)"></div>
<div class="t" style="left:530.1px;top:341.28px;font-size:8.6px;color:#333;width:19px;text-align:right;">36</div>
<div class="a" style="left:551px;top:339px;width:21px;height:13px;background:#dcf200;border-right:1px solid rgba(255,255,255,0.45);border-bottom:1px solid rgba(255,255,255,0.45)"></div>
<div class="t" style="left:550.9px;top:341.28px;font-size:8.6px;color:#333;width:19px;text-align:right;">41</div>
<div class="a" style="left:572px;top:339px;width:21px;height:13px;background:#fff600;border-right:1px solid rgba(255,255,255,0.45);border-bottom:1px solid rgba(255,255,255,0.45)"></div>
<div class="t" style="left:571.8px;top:341.28px;font-size:8.6px;color:#333;width:19px;text-align:right;">46</div>
<div class="a" style="left:593px;top:339px;width:20px;height:13px;background:#ffe200;border-right:1px solid rgba(255,255,255,0.45);border-bottom:1px solid rgba(255,255,255,0.45)"></div>
<div class="t" style="left:592.6px;top:341.28px;font-size:8.6px;color:#333;width:19px;text-align:right;">51</div>
<div class="a" style="left:613px;top:339px;width:21px;height:13px;background:#ffdb00;border-right:1px solid rgba(255,255,255,0.45);border-bottom:1px solid rgba(255,255,255,0.45)"></div>
<div class="t" style="left:613.4px;top:341.28px;font-size:8.6px;color:#333;width:19px;text-align:right;">54</div>
<div class="a" style="left:634px;top:339px;width:21px;height:13px;background:#ffd600;border-right:1px solid rgba(255,255,255,0.45);border-bottom:1px solid rgba(255,255,255,0.45)"></div>
<div class="t" style="left:634.2px;top:341.28px;font-size:8.6px;color:#333;width:19px;text-align:right;">56</div>
<div class="a" style="left:655px;top:339px;width:21px;height:13px;background:#ffd200;border-right:1px solid rgba(255,255,255,0.45);border-bottom:1px solid rgba(255,255,255,0.45)"></div>
<div class="t" style="left:655.1px;top:341.28px;font-size:8.6px;color:#333;width:19px;text-align:right;">58</div>
<div class="a" style="left:676px;top:339px;width:21px;height:13px;background:#ffcd00;border-right:1px solid rgba(255,255,255,0.45);border-bottom:1px solid rgba(255,255,255,0.45)"></div>
<div class="t" style="left:675.9px;top:341.28px;font-size:8.6px;color:#333;width:19px;text-align:right;">60</div>
<div class="a" style="left:697px;top:339px;width:21px;height:13px;background:#ffc800;border-right:1px solid rgba(255,255,255,0.45);border-bottom:1px solid rgba(255,255,255,0.45)"></div>
<div class="t" style="left:696.7px;top:341.28px;font-size:8.6px;color:#333;width:19px;text-align:right;">62</div>
<div class="a" style="left:718px;top:339px;width:20px;height:13px;background:#ffc400;border-right:1px solid rgba(255,255,255,0.45);border-bottom:1px solid rgba(255,255,255,0.45)"></div>
<div class="t" style="left:717.5px;top:341.28px;font-size:8.6px;color:#333;width:19px;text-align:right;">64</div>
<div class="a" style="left:738px;top:339px;width:21px;height:13px;background:#ffc200;border-right:1px solid rgba(255,255,255,0.45);border-bottom:1px solid rgba(255,255,255,0.45)"></div>
<div class="t" style="left:738.4px;top:341.28px;font-size:8.6px;color:#333;width:19px;text-align:right;">65</div>
<div class="a" style="left:759px;top:339px;width:21px;height:13px;background:#ffbd00;border-right:1px solid rgba(255,255,255,0.45);border-bottom:1px solid rgba(255,255,255,0.45)"></div>
<div class="t" style="left:759.2px;top:341.28px;font-size:8.6px;color:#333;width:19px;text-align:right;">67</div>
<div class="a" style="left:377px;top:352px;width:49px;height:13px;background:#f7f7f7;border-bottom:1px solid #d8d8d8;border-right:1px solid #d0d0d0"></div>
<div class="t" style="left:379.4px;top:354.14px;font-size:8.6px;color:#2e2e2e;">3 -> 4 Shift</div>
<div class="a" style="left:426px;top:352px;width:21px;height:13px;background:#ffcd00;border-right:1px solid rgba(255,255,255,0.45);border-bottom:1px solid rgba(255,255,255,0.45)"></div>
<div class="t" style="left:426.0px;top:354.14px;font-size:8.6px;color:#333;width:19px;text-align:right;">60</div>
<div class="a" style="left:447px;top:352px;width:21px;height:13px;background:#ffcd00;border-right:1px solid rgba(255,255,255,0.45);border-bottom:1px solid rgba(255,255,255,0.45)"></div>
<div class="t" style="left:446.8px;top:354.14px;font-size:8.6px;color:#333;width:19px;text-align:right;">60</div>
<div class="a" style="left:468px;top:352px;width:20px;height:13px;background:#ffcd00;border-right:1px solid rgba(255,255,255,0.45);border-bottom:1px solid rgba(255,255,255,0.45)"></div>
<div class="t" style="left:467.6px;top:354.14px;font-size:8.6px;color:#333;width:19px;text-align:right;">60</div>
<div class="a" style="left:488px;top:352px;width:21px;height:13px;background:#ffcd00;border-right:1px solid rgba(255,255,255,0.45);border-bottom:1px solid rgba(255,255,255,0.45)"></div>
<div class="t" style="left:488.5px;top:354.14px;font-size:8.6px;color:#333;width:19px;text-align:right;">60</div>
<div class="a" style="left:509px;top:352px;width:21px;height:13px;background:#ffcd00;border-right:1px solid rgba(255,255,255,0.45);border-bottom:1px solid rgba(255,255,255,0.45)"></div>
<div class="t" style="left:509.3px;top:354.14px;font-size:8.6px;color:#333;width:19px;text-align:right;">60</div>
<div class="a" style="left:530px;top:352px;width:21px;height:13px;background:#ffcd00;border-right:1px solid rgba(255,255,255,0.45);border-bottom:1px solid rgba(255,255,255,0.45)"></div>
<div class="t" style="left:530.1px;top:354.14px;font-size:8.6px;color:#333;width:19px;text-align:right;">60</div>
<div class="a" style="left:551px;top:352px;width:21px;height:13px;background:#ffc400;border-right:1px solid rgba(255,255,255,0.45);border-bottom:1px solid rgba(255,255,255,0.45)"></div>
<div class="t" style="left:550.9px;top:354.14px;font-size:8.6px;color:#333;width:19px;text-align:right;">64</div>
<div class="a" style="left:572px;top:352px;width:21px;height:13px;background:#ffb400;border-right:1px solid rgba(255,255,255,0.45);border-bottom:1px solid rgba(255,255,255,0.45)"></div>
<div class="t" style="left:571.8px;top:354.14px;font-size:8.6px;color:#333;width:19px;text-align:right;">71</div>
<div class="a" style="left:593px;top:352px;width:20px;height:13px;background:#ffa500;border-right:1px solid rgba(255,255,255,0.45);border-bottom:1px solid rgba(255,255,255,0.45)"></div>
<div class="t" style="left:592.6px;top:354.14px;font-size:8.6px;color:#333;width:19px;text-align:right;">77</div>
<div class="a" style="left:613px;top:352px;width:21px;height:13px;background:#ff9f00;border-right:1px solid rgba(255,255,255,0.45);border-bottom:1px solid rgba(255,255,255,0.45)"></div>
<div class="t" style="left:613.4px;top:354.14px;font-size:8.6px;color:#333;width:19px;text-align:right;">82</div>
<div class="a" style="left:634px;top:352px;width:21px;height:13px;background:#ff9b00;border-right:1px solid rgba(255,255,255,0.45);border-bottom:1px solid rgba(255,255,255,0.45)"></div>
<div class="t" style="left:634.2px;top:354.14px;font-size:8.6px;color:#333;width:19px;text-align:right;">86</div>
<div class="a" style="left:655px;top:352px;width:21px;height:13px;background:#ff9500;border-right:1px solid rgba(255,255,255,0.45);border-bottom:1px solid rgba(255,255,255,0.45)"></div>
<div class="t" style="left:655.1px;top:354.14px;font-size:8.6px;color:#333;width:19px;text-align:right;">89</div>
<div class="a" style="left:676px;top:352px;width:21px;height:13px;background:#ff9000;border-right:1px solid rgba(255,255,255,0.45);border-bottom:1px solid rgba(255,255,255,0.45)"></div>
<div class="t" style="left:675.9px;top:354.14px;font-size:8.6px;color:#333;width:19px;text-align:right;">92</div>
<div class="a" style="left:697px;top:352px;width:21px;height:13px;background:#ff8e00;border-right:1px solid rgba(255,255,255,0.45);border-bottom:1px solid rgba(255,255,255,0.45)"></div>
<div class="t" style="left:696.7px;top:354.14px;font-size:8.6px;color:#333;width:19px;text-align:right;">93</div>
<div class="a" style="left:718px;top:352px;width:20px;height:13px;background:#ff8e00;border-right:1px solid rgba(255,255,255,0.45);border-bottom:1px solid rgba(255,255,255,0.45)"></div>
<div class="t" style="left:717.5px;top:354.14px;font-size:8.6px;color:#333;width:19px;text-align:right;">93</div>
<div class="a" style="left:738px;top:352px;width:21px;height:13px;background:#ff8e00;border-right:1px solid rgba(255,255,255,0.45);border-bottom:1px solid rgba(255,255,255,0.45)"></div>
<div class="t" style="left:738.4px;top:354.14px;font-size:8.6px;color:#333;width:19px;text-align:right;">93</div>
<div class="a" style="left:759px;top:352px;width:21px;height:13px;background:#ff8a00;border-right:1px solid rgba(255,255,255,0.45);border-bottom:1px solid rgba(255,255,255,0.45)"></div>
<div class="t" style="left:759.2px;top:354.14px;font-size:8.6px;color:#333;width:19px;text-align:right;">95</div>
<div class="a" style="left:377px;top:365px;width:49px;height:13px;background:#f7f7f7;border-bottom:1px solid #d8d8d8;border-right:1px solid #d0d0d0"></div>
<div class="t" style="left:379.4px;top:367.00px;font-size:8.6px;color:#2e2e2e;">2 -> 1 Shift</div>
<div class="a" style="left:426px;top:365px;width:21px;height:12px;background:#18e418;border-right:1px solid rgba(255,255,255,0.45);border-bottom:1px solid rgba(255,255,255,0.45)"></div>
<div class="t" style="left:426.0px;top:367.00px;font-size:8.6px;color:#333;width:19px;text-align:right;">15</div>
<div class="a" style="left:447px;top:365px;width:21px;height:12px;background:#18e418;border-right:1px solid rgba(255,255,255,0.45);border-bottom:1px solid rgba(255,255,255,0.45)"></div>
<div class="t" style="left:446.8px;top:367.00px;font-size:8.6px;color:#333;width:19px;text-align:right;">15</div>
<div class="a" style="left:468px;top:365px;width:20px;height:12px;background:#18e418;border-right:1px solid rgba(255,255,255,0.45);border-bottom:1px solid rgba(255,255,255,0.45)"></div>
<div class="t" style="left:467.6px;top:367.00px;font-size:8.6px;color:#333;width:19px;text-align:right;">15</div>
<div class="a" style="left:488px;top:365px;width:21px;height:12px;background:#18e418;border-right:1px solid rgba(255,255,255,0.45);border-bottom:1px solid rgba(255,255,255,0.45)"></div>
<div class="t" style="left:488.5px;top:367.00px;font-size:8.6px;color:#333;width:19px;text-align:right;">15</div>
<div class="a" style="left:509px;top:365px;width:21px;height:12px;background:#18e418;border-right:1px solid rgba(255,255,255,0.45);border-bottom:1px solid rgba(255,255,255,0.45)"></div>
<div class="t" style="left:509.3px;top:367.00px;font-size:8.6px;color:#333;width:19px;text-align:right;">15</div>
<div class="a" style="left:530px;top:365px;width:21px;height:12px;background:#18e418;border-right:1px solid rgba(255,255,255,0.45);border-bottom:1px solid rgba(255,255,255,0.45)"></div>
<div class="t" style="left:530.1px;top:367.00px;font-size:8.6px;color:#333;width:19px;text-align:right;">15</div>
<div class="a" style="left:551px;top:365px;width:21px;height:12px;background:#18e418;border-right:1px solid rgba(255,255,255,0.45);border-bottom:1px solid rgba(255,255,255,0.45)"></div>
<div class="t" style="left:550.9px;top:367.00px;font-size:8.6px;color:#333;width:19px;text-align:right;">15</div>
<div class="a" style="left:572px;top:365px;width:21px;height:12px;background:#18e418;border-right:1px solid rgba(255,255,255,0.45);border-bottom:1px solid rgba(255,255,255,0.45)"></div>
<div class="t" style="left:571.8px;top:367.00px;font-size:8.6px;color:#333;width:19px;text-align:right;">15</div>
<div class="a" style="left:593px;top:365px;width:20px;height:12px;background:#18e418;border-right:1px solid rgba(255,255,255,0.45);border-bottom:1px solid rgba(255,255,255,0.45)"></div>
<div class="t" style="left:592.6px;top:367.00px;font-size:8.6px;color:#333;width:19px;text-align:right;">15</div>
<div class="a" style="left:613px;top:365px;width:21px;height:12px;background:#18e418;border-right:1px solid rgba(255,255,255,0.45);border-bottom:1px solid rgba(255,255,255,0.45)"></div>
<div class="t" style="left:613.4px;top:367.00px;font-size:8.6px;color:#333;width:19px;text-align:right;">15</div>
<div class="a" style="left:634px;top:365px;width:21px;height:12px;background:#18e418;border-right:1px solid rgba(255,255,255,0.45);border-bottom:1px solid rgba(255,255,255,0.45)"></div>
<div class="t" style="left:634.2px;top:367.00px;font-size:8.6px;color:#333;width:19px;text-align:right;">15</div>
<div class="a" style="left:655px;top:365px;width:21px;height:12px;background:#18e418;border-right:1px solid rgba(255,255,255,0.45);border-bottom:1px solid rgba(255,255,255,0.45)"></div>
<div class="t" style="left:655.1px;top:367.00px;font-size:8.6px;color:#333;width:19px;text-align:right;">15</div>
<div class="a" style="left:676px;top:365px;width:21px;height:12px;background:#18e418;border-right:1px solid rgba(255,255,255,0.45);border-bottom:1px solid rgba(255,255,255,0.45)"></div>
<div class="t" style="left:675.9px;top:367.00px;font-size:8.6px;color:#333;width:19px;text-align:right;">15</div>
<div class="a" style="left:697px;top:365px;width:21px;height:12px;background:#18e418;border-right:1px solid rgba(255,255,255,0.45);border-bottom:1px solid rgba(255,255,255,0.45)"></div>
<div class="t" style="left:696.7px;top:367.00px;font-size:8.6px;color:#333;width:19px;text-align:right;">15</div>
<div class="a" style="left:718px;top:365px;width:20px;height:12px;background:#18e418;border-right:1px solid rgba(255,255,255,0.45);border-bottom:1px solid rgba(255,255,255,0.45)"></div>
<div class="t" style="left:717.5px;top:367.00px;font-size:8.6px;color:#333;width:19px;text-align:right;">15</div>
<div class="a" style="left:738px;top:365px;width:21px;height:12px;background:#18e418;border-right:1px solid rgba(255,255,255,0.45);border-bottom:1px solid rgba(255,255,255,0.45)"></div>
<div class="t" style="left:738.4px;top:367.00px;font-size:8.6px;color:#333;width:19px;text-align:right;">15</div>
<div class="a" style="left:759px;top:365px;width:21px;height:12px;background:#98ed11;border-right:1px solid rgba(255,255,255,0.45);border-bottom:1px solid rgba(255,255,255,0.45)"></div>
<div class="t" style="left:759.2px;top:367.00px;font-size:8.6px;color:#333;width:19px;text-align:right;">35</div>
<div class="a" style="left:377px;top:377px;width:49px;height:13px;background:#f7f7f7;border-bottom:1px solid #d8d8d8;border-right:1px solid #d0d0d0"></div>
<div class="t" style="left:379.4px;top:379.86px;font-size:8.6px;color:#2e2e2e;">3 -> 2 Shift</div>
<div class="a" style="left:426px;top:377px;width:21px;height:13px;background:#64e61e;border-right:1px solid rgba(255,255,255,0.45);border-bottom:1px solid rgba(255,255,255,0.45)"></div>
<div class="t" style="left:426.0px;top:379.86px;font-size:8.6px;color:#333;width:19px;text-align:right;">29</div>
<div class="a" style="left:447px;top:377px;width:21px;height:13px;background:#64e61e;border-right:1px solid rgba(255,255,255,0.45);border-bottom:1px solid rgba(255,255,255,0.45)"></div>
<div class="t" style="left:446.8px;top:379.86px;font-size:8.6px;color:#333;width:19px;text-align:right;">29</div>
<div class="a" style="left:468px;top:377px;width:20px;height:13px;background:#64e61e;border-right:1px solid rgba(255,255,255,0.45);border-bottom:1px solid rgba(255,255,255,0.45)"></div>
<div class="t" style="left:467.6px;top:379.86px;font-size:8.6px;color:#333;width:19px;text-align:right;">29</div>
<div class="a" style="left:488px;top:377px;width:21px;height:13px;background:#64e61e;border-right:1px solid rgba(255,255,255,0.45);border-bottom:1px solid rgba(255,255,255,0.45)"></div>
<div class="t" style="left:488.5px;top:379.86px;font-size:8.6px;color:#333;width:19px;text-align:right;">29</div>
<div class="a" style="left:509px;top:377px;width:21px;height:13px;background:#64e61e;border-right:1px solid rgba(255,255,255,0.45);border-bottom:1px solid rgba(255,255,255,0.45)"></div>
<div class="t" style="left:509.3px;top:379.86px;font-size:8.6px;color:#333;width:19px;text-align:right;">29</div>
<div class="a" style="left:530px;top:377px;width:21px;height:13px;background:#64e61e;border-right:1px solid rgba(255,255,255,0.45);border-bottom:1px solid rgba(255,255,255,0.45)"></div>
<div class="t" style="left:530.1px;top:379.86px;font-size:8.6px;color:#333;width:19px;text-align:right;">29</div>
<div class="a" style="left:551px;top:377px;width:21px;height:13px;background:#64e61e;border-right:1px solid rgba(255,255,255,0.45);border-bottom:1px solid rgba(255,255,255,0.45)"></div>
<div class="t" style="left:550.9px;top:379.86px;font-size:8.6px;color:#333;width:19px;text-align:right;">29</div>
<div class="a" style="left:572px;top:377px;width:21px;height:13px;background:#64e61e;border-right:1px solid rgba(255,255,255,0.45);border-bottom:1px solid rgba(255,255,255,0.45)"></div>
<div class="t" style="left:571.8px;top:379.86px;font-size:8.6px;color:#333;width:19px;text-align:right;">29</div>
<div class="a" style="left:593px;top:377px;width:20px;height:13px;background:#64e61e;border-right:1px solid rgba(255,255,255,0.45);border-bottom:1px solid rgba(255,255,255,0.45)"></div>
<div class="t" style="left:592.6px;top:379.86px;font-size:8.6px;color:#333;width:19px;text-align:right;">29</div>
<div class="a" style="left:613px;top:377px;width:21px;height:13px;background:#64e61e;border-right:1px solid rgba(255,255,255,0.45);border-bottom:1px solid rgba(255,255,255,0.45)"></div>
<div class="t" style="left:613.4px;top:379.86px;font-size:8.6px;color:#333;width:19px;text-align:right;">29</div>
<div class="a" style="left:634px;top:377px;width:21px;height:13px;background:#64e61e;border-right:1px solid rgba(255,255,255,0.45);border-bottom:1px solid rgba(255,255,255,0.45)"></div>
<div class="t" style="left:634.2px;top:379.86px;font-size:8.6px;color:#333;width:19px;text-align:right;">29</div>
<div class="a" style="left:655px;top:377px;width:21px;height:13px;background:#8cec14;border-right:1px solid rgba(255,255,255,0.45);border-bottom:1px solid rgba(255,255,255,0.45)"></div>
<div class="t" style="left:655.1px;top:379.86px;font-size:8.6px;color:#333;width:19px;text-align:right;">34</div>
<div class="a" style="left:676px;top:377px;width:21px;height:13px;background:#baf008;border-right:1px solid rgba(255,255,255,0.45);border-bottom:1px solid rgba(255,255,255,0.45)"></div>
<div class="t" style="left:675.9px;top:379.86px;font-size:8.6px;color:#333;width:19px;text-align:right;">38</div>
<div class="a" style="left:697px;top:377px;width:21px;height:13px;background:#e5f400;border-right:1px solid rgba(255,255,255,0.45);border-bottom:1px solid rgba(255,255,255,0.45)"></div>
<div class="t" style="left:696.7px;top:379.86px;font-size:8.6px;color:#333;width:19px;text-align:right;">42</div>
<div class="a" style="left:718px;top:377px;width:20px;height:13px;background:#fff600;border-right:1px solid rgba(255,255,255,0.45);border-bottom:1px solid rgba(255,255,255,0.45)"></div>
<div class="t" style="left:717.5px;top:379.86px;font-size:8.6px;color:#333;width:19px;text-align:right;">46</div>
<div class="a" style="left:738px;top:377px;width:21px;height:13px;background:#fff600;border-right:1px solid rgba(255,255,255,0.45);border-bottom:1px solid rgba(255,255,255,0.45)"></div>
<div class="t" style="left:738.4px;top:379.86px;font-size:8.6px;color:#333;width:19px;text-align:right;">46</div>
<div class="a" style="left:759px;top:377px;width:21px;height:13px;background:#ffcf00;border-right:1px solid rgba(255,255,255,0.45);border-bottom:1px solid rgba(255,255,255,0.45)"></div>
<div class="t" style="left:759.2px;top:379.86px;font-size:8.6px;color:#333;width:19px;text-align:right;">59</div>
<div class="a" style="left:377px;top:390px;width:49px;height:13px;background:#f7f7f7;border-bottom:1px solid #d8d8d8;border-right:1px solid #d0d0d0"></div>
<div class="t" style="left:379.4px;top:392.72px;font-size:8.6px;color:#2e2e2e;">4 -> 3 Shift</div>
<div class="a" style="left:426px;top:390px;width:21px;height:13px;background:#fffa00;border-right:1px solid rgba(255,255,255,0.45);border-bottom:1px solid rgba(255,255,255,0.45)"></div>
<div class="t" style="left:426.0px;top:392.72px;font-size:8.6px;color:#333;width:19px;text-align:right;">45</div>
<div class="a" style="left:447px;top:390px;width:21px;height:13px;background:#fffa00;border-right:1px solid rgba(255,255,255,0.45);border-bottom:1px solid rgba(255,255,255,0.45)"></div>
<div class="t" style="left:446.8px;top:392.72px;font-size:8.6px;color:#333;width:19px;text-align:right;">45</div>
<div class="a" style="left:468px;top:390px;width:20px;height:13px;background:#fffa00;border-right:1px solid rgba(255,255,255,0.45);border-bottom:1px solid rgba(255,255,255,0.45)"></div>
<div class="t" style="left:467.6px;top:392.72px;font-size:8.6px;color:#333;width:19px;text-align:right;">45</div>
<div class="a" style="left:488px;top:390px;width:21px;height:13px;background:#fffa00;border-right:1px solid rgba(255,255,255,0.45);border-bottom:1px solid rgba(255,255,255,0.45)"></div>
<div class="t" style="left:488.5px;top:392.72px;font-size:8.6px;color:#333;width:19px;text-align:right;">45</div>
<div class="a" style="left:509px;top:390px;width:21px;height:13px;background:#fffa00;border-right:1px solid rgba(255,255,255,0.45);border-bottom:1px solid rgba(255,255,255,0.45)"></div>
<div class="t" style="left:509.3px;top:392.72px;font-size:8.6px;color:#333;width:19px;text-align:right;">45</div>
<div class="a" style="left:530px;top:390px;width:21px;height:13px;background:#fffa00;border-right:1px solid rgba(255,255,255,0.45);border-bottom:1px solid rgba(255,255,255,0.45)"></div>
<div class="t" style="left:530.1px;top:392.72px;font-size:8.6px;color:#333;width:19px;text-align:right;">45</div>
<div class="a" style="left:551px;top:390px;width:21px;height:13px;background:#fffa00;border-right:1px solid rgba(255,255,255,0.45);border-bottom:1px solid rgba(255,255,255,0.45)"></div>
<div class="t" style="left:550.9px;top:392.72px;font-size:8.6px;color:#333;width:19px;text-align:right;">45</div>
<div class="a" style="left:572px;top:390px;width:21px;height:13px;background:#fffa00;border-right:1px solid rgba(255,255,255,0.45);border-bottom:1px solid rgba(255,255,255,0.45)"></div>
<div class="t" style="left:571.8px;top:392.72px;font-size:8.6px;color:#333;width:19px;text-align:right;">45</div>
<div class="a" style="left:593px;top:390px;width:20px;height:13px;background:#fffa00;border-right:1px solid rgba(255,255,255,0.45);border-bottom:1px solid rgba(255,255,255,0.45)"></div>
<div class="t" style="left:592.6px;top:392.72px;font-size:8.6px;color:#333;width:19px;text-align:right;">45</div>
<div class="a" style="left:613px;top:390px;width:21px;height:13px;background:#fffa00;border-right:1px solid rgba(255,255,255,0.45);border-bottom:1px solid rgba(255,255,255,0.45)"></div>
<div class="t" style="left:613.4px;top:392.72px;font-size:8.6px;color:#333;width:19px;text-align:right;">45</div>
<div class="a" style="left:634px;top:390px;width:21px;height:13px;background:#ffe200;border-right:1px solid rgba(255,255,255,0.45);border-bottom:1px solid rgba(255,255,255,0.45)"></div>
<div class="t" style="left:634.2px;top:392.72px;font-size:8.6px;color:#333;width:19px;text-align:right;">51</div>
<div class="a" style="left:655px;top:390px;width:21px;height:13px;background:#ffd600;border-right:1px solid rgba(255,255,255,0.45);border-bottom:1px solid rgba(255,255,255,0.45)"></div>
<div class="t" style="left:655.1px;top:392.72px;font-size:8.6px;color:#333;width:19px;text-align:right;">56</div>
<div class="a" style="left:676px;top:390px;width:21px;height:13px;background:#ffcb00;border-right:1px solid rgba(255,255,255,0.45);border-bottom:1px solid rgba(255,255,255,0.45)"></div>
<div class="t" style="left:675.9px;top:392.72px;font-size:8.6px;color:#333;width:19px;text-align:right;">61</div>
<div class="a" style="left:697px;top:390px;width:21px;height:13px;background:#ffbf00;border-right:1px solid rgba(255,255,255,0.45);border-bottom:1px solid rgba(255,255,255,0.45)"></div>
<div class="t" style="left:696.7px;top:392.72px;font-size:8.6px;color:#333;width:19px;text-align:right;">66</div>
<div class="a" style="left:718px;top:390px;width:20px;height:13px;background:#ff9c00;border-right:1px solid rgba(255,255,255,0.45);border-bottom:1px solid rgba(255,255,255,0.45)"></div>
<div class="t" style="left:717.5px;top:392.72px;font-size:8.6px;color:#333;width:19px;text-align:right;">85</div>
<div class="a" style="left:738px;top:390px;width:21px;height:13px;background:#ff9c00;border-right:1px solid rgba(255,255,255,0.45);border-bottom:1px solid rgba(255,255,255,0.45)"></div>
<div class="t" style="left:738.4px;top:392.72px;font-size:8.6px;color:#333;width:19px;text-align:right;">85</div>
<div class="a" style="left:759px;top:390px;width:21px;height:13px;background:#ff9700;border-right:1px solid rgba(255,255,255,0.45);border-bottom:1px solid rgba(255,255,255,0.45)"></div>
<div class="t" style="left:759.2px;top:392.72px;font-size:8.6px;color:#333;width:19px;text-align:right;">88</div>
<div class="a" style="left:426px;top:326px;width:21px;height:13px;border:1px solid #1a4a1a"></div>
<div class="a" style="left:780px;top:313px;width:13px;height:90px;background:#a3a3a3"></div>
<svg class="a" style="left:579px;top:375px" width="10" height="15" viewBox="0 0 10 15"><path d="M0.5 0.5 L0.5 12 L3.3 9.4 L5.3 14 L7.2 13.2 L5.3 8.8 L9 8.8Z" fill="#fff" stroke="#111" stroke-width="0.8"/></svg>
<div class="a" style="left:64px;top:688px;width:1149px;height:32px;background:#0e1118"></div>
<div class="a" style="left:1212px;top:688px;width:1px;height:32px;background:#3a3d44"></div>
<div class="a" style="left:1213px;top:688px;width:3px;height:32px;background:#070707"></div>
<div class="a" style="left:64px;top:688px;width:38px;height:32px;background:#0b0d12"></div>
<svg class="a" style="left:76.5px;top:697.5px" width="14" height="14" viewBox="0 0 14 14"><path d="M0 1.9 L5.8 1.1 V6.6 H0Z M6.6 1 L14 0 V6.6 H6.6Z M0 7.4 H5.8 V12.9 L0 12.1Z M6.6 7.4 H14 V14 L6.6 13Z" fill="#fff"/></svg>
<div class="a" style="left:102px;top:688px;width:275px;height:32px;background:#f2f2f2"></div>
<svg class="a" style="left:110px;top:696px" width="17" height="17" viewBox="0 0 17 17"><circle cx="8.5" cy="8.5" r="7" fill="none" stroke="#111" stroke-width="2"/></svg>
<div class="t" style="left:134.4px;top:698.88px;font-size:11.13px;color:#555;">Type here to search</div>
<svg class="a" style="left:356px;top:697px" width="10" height="15" viewBox="0 0 10 15"><rect x="2.5" y="0.8" width="5" height="9" rx="2.5" fill="none" stroke="#666" stroke-width="1.3"/><path d="M1 7 A4 4 0 0 0 9 7 M5 11 V14 M2.5 14 H7.5" fill="none" stroke="#666" stroke-width="1.2"/></svg>
<svg class="a" style="left:389.5px;top:697.5px" width="14" height="13" viewBox="0 0 14 13"><rect x="1" y="2" width="8" height="9" fill="none" stroke="#e8e8e8" stroke-width="1.6"/><path d="M0 0.8 H10 M0 12.2 H10 M12.5 2 V11" stroke="#e8e8e8" stroke-width="1.6"/><rect x="11.7" y="0" width="1.6" height="1.6" fill="#e8e8e8"/></svg>
<svg class="a" style="left:429px;top:696px" width="17" height="17" viewBox="0 0 17 17"><path d="M15.5 9.5 H4.2 C4.5 13.5 8 15.5 11.5 15 C13 14.8 14.5 14.2 15.5 13.5 V16 C14 16.8 12 17 10.5 17 C5 17 1 13 1 8 C1 3 5 0 9.5 0 C14 0 16.5 3.5 16.5 7.5Z M4.3 7 H12.5 C12.3 4.5 10.8 3 8.5 3 C6.2 3 4.6 4.6 4.3 7Z" fill="#1f7ad8"/></svg>
<div class="a" style="left:421.5px;top:718px;width:32px;height:2px;background:#7ab0e0"></div>
<svg class="a" style="left:468px;top:697px" width="18" height="15" viewBox="0 0 18 15"><path d="M0.5 1 H6.5 L8 3 H17.5 V14.5 H0.5Z" fill="#f5c64e"/><rect x="0.5" y="5" width="17" height="9.5" fill="#ffd86a"/><rect x="4.5" y="8" width="9" height="6.5" fill="#2a8ad8"/><rect x="6.5" y="10" width="5" height="4.5" fill="#ffd86a"/></svg>
<div class="a" style="left:496.5px;top:688px;width:38px;height:32px;background:#2c2f36"></div>
<svg class="a" style="left:507px;top:696px" width="18" height="17" viewBox="0 0 18 17"><path d="M2 15.5 L10 7.5" stroke="#d8d8d8" stroke-width="3" stroke-linecap="round"/><path d="M9 7.5 A5 5 0 0 1 15 1.5 L12.5 4 L14 5.5 L16.5 3 A5 5 0 0 1 10.5 9Z" fill="#d8d8d8"/></svg>
<div class="a" style="left:496.5px;top:718px;width:38px;height:2px;background:#7ab0e0"></div>
<svg class="a" style="left:547px;top:696px" width="17" height="17" viewBox="0 0 17 17"><path d="M8 0 H16 L10 6 H14 L2 17 L6.5 9 H2.5Z" fill="#f5c020"/><path d="M8 0 H16 L10 6 H14 L2 17" fill="none" stroke="#c89010" stroke-width="0.6"/></svg>
<div class="a" style="left:539px;top:718px;width:32px;height:2px;background:#7ab0e0"></div>
<svg class="a" style="left:1017.5px;top:697.5px" width="13" height="13" viewBox="0 0 13 13"><circle cx="8.5" cy="3" r="2.3" fill="none" stroke="#ddd" stroke-width="1.2"/><path d="M5 9 A3.5 3.5 0 0 1 12 9" fill="none" stroke="#ddd" stroke-width="1.2"/><circle cx="4" cy="6.5" r="2.3" fill="#0e1118" stroke="#ddd" stroke-width="1.2"/><path d="M0.5 12.5 A3.5 3.5 0 0 1 7.5 12.5" fill="none" stroke="#ddd" stroke-width="1.2"/></svg>
<svg class="a" style="left:1046.5px;top:700.5px" width="12" height="7" viewBox="0 0 12 7"><path d="M0.8 6 L6 1 L11.2 6" fill="none" stroke="#ddd" stroke-width="1.3"/></svg>
<svg class="a" style="left:1065px;top:698.5px" width="13" height="11" viewBox="0 0 13 11"><rect x="2" y="3" width="10.5" height="7" rx="1" fill="none" stroke="#ddd" stroke-width="1.1"/><rect x="3.5" y="5" width="5" height="3.5" fill="#ddd"/><circle cx="2.5" cy="2.5" r="2" fill="#0e1118" stroke="#ddd" stroke-width="1"/></svg>
<svg class="a" style="left:1084px;top:698px" width="14" height="13" viewBox="0 0 14 13"><rect x="3" y="0.8" width="10.2" height="8" fill="none" stroke="#ddd" stroke-width="1.1"/><path d="M8 9 V11.5 M5.5 12 H10.5 M0.8 2 V12.5" stroke="#ddd" stroke-width="1.1"/><rect x="0" y="1" width="2" height="3" fill="#ddd"/></svg>
<svg class="a" style="left:1103px;top:698.5px" width="12" height="12" viewBox="0 0 12 12"><path d="M0.8 4 H3 L6.5 1 V11 L3 8 H0.8Z" fill="none" stroke="#ddd" stroke-width="1.1"/><path d="M8 3.5 A3 3 0 0 1 8 8.5 M9.8 1.8 A5 5 0 0 1 9.8 10.2" fill="none" stroke="#ddd" stroke-width="1"/></svg>
<div class="t" style="left:1129.0px;top:692.57px;font-size:9.13px;color:#e8e8e8;">9:24 PM</div>
<div class="t" style="left:1122.6px;top:707.10px;font-size:9.69px;color:#e8e8e8;">11/13/2018</div>
<svg class="a" style="left:1183px;top:697.5px" width="14" height="13" viewBox="0 0 14 13"><path d="M0.8 0.8 H13.2 V9.5 H8 L6.5 12 L5 9.5 H0.8Z" fill="none" stroke="#e8e8e8" stroke-width="1.2"/></svg>
</body></html>
